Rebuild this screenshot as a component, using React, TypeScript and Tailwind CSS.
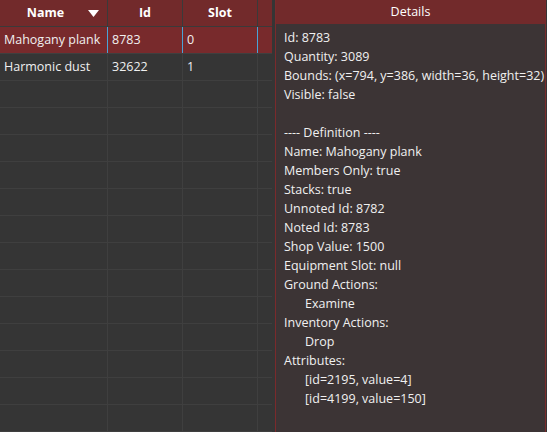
const ROWS = [
  { name: 'Mahogany plank', id: '8783', slot: '0' },
  { name: 'Harmonic dust', id: '32622', slot: '1' },
]

const DETAILS: { text: string; indent?: boolean }[] = [
  { text: 'Id: 8783' },
  { text: 'Quantity: 3089' },
  { text: 'Bounds: (x=794, y=386, width=36, height=32)' },
  { text: 'Visible: false' },
  { text: '' },
  { text: '---- Definition ----' },
  { text: 'Name: Mahogany plank' },
  { text: 'Members Only: true' },
  { text: 'Stacks: true' },
  { text: 'Unnoted Id: 8782' },
  { text: 'Noted Id: 8783' },
  { text: 'Shop Value: 1500' },
  { text: 'Equipment Slot: null' },
  { text: 'Ground Actions:' },
  { text: 'Examine', indent: true },
  { text: 'Inventory Actions:' },
  { text: 'Drop', indent: true },
  { text: 'Attributes:' },
  { text: '[id=2195, value=4]', indent: true },
  { text: '[id=4199, value=150]', indent: true },
]

const font = { fontFamily: '"Open Sans", "Noto Sans", sans-serif' }

export default function App() {
  const filler = Array.from({ length: 16 - ROWS.length })

  return (
    <div className="w-[547px] h-[432px] overflow-hidden bg-[#353535] flex text-[12.5px] text-[#f0f0f0]" style={font}>
      {/* Item table */}
      <div className="w-[272px] shrink-0 flex flex-col">
        <div className="h-[27px] shrink-0 flex bg-[#722a2b] border-b border-[#3a3a3a] font-bold text-white">
          <div className="w-[108px] border-r border-[#3a3a3a] flex items-center justify-center relative">
            <span className="-ml-4">Name</span>
            <svg className="absolute left-[88px] top-[10px]" width="11" height="7" viewBox="0 0 11 7">
              <path d="M0 0H11L5.5 7Z" fill="#fff" />
            </svg>
          </div>
          <div className="w-[75px] border-r border-[#3a3a3a] flex items-center justify-center">Id</div>
          <div className="w-[75px] border-r border-[#3a3a3a] flex items-center justify-center">Slot</div>
          <div className="flex-1" />
        </div>
        {ROWS.map((r, i) => (
          <div
            key={r.id}
            className={`h-[27px] shrink-0 flex border-b border-[#3f3f3f] ${i === 0 ? 'bg-[#782a2c]' : ''}`}
          >
            <div className={`w-[108px] border-r pl-[4px] flex items-center ${i === 0 ? 'border-[#4aa3d6]' : 'border-[#3f3f3f]'}`}>{r.name}</div>
            <div className={`w-[75px] border-r pl-[4px] flex items-center ${i === 0 ? 'border-[#4aa3d6]' : 'border-[#3f3f3f]'}`}>{r.id}</div>
            <div className={`w-[75px] border-r pl-[4px] flex items-center ${i === 0 ? 'border-[#4aa3d6]' : 'border-[#3f3f3f]'}`}>{r.slot}</div>
            <div className="flex-1" />
          </div>
        ))}
        {filler.map((_, i) => (
          <div key={i} className="h-[27px] shrink-0 flex border-b border-[#3f3f3f]">
            <div className="w-[108px] border-r border-[#3f3f3f]" />
            <div className="w-[75px] border-r border-[#3f3f3f]" />
            <div className="w-[75px] border-r border-[#3f3f3f]" />
            <div className="flex-1" />
          </div>
        ))}
      </div>

      {/* Details panel */}
      <div className="ml-[3px] w-[271px] mr-[1px] flex flex-col border-x border-[#7a2a2c] bg-[#3c3435]">
        <div className="h-[24px] shrink-0 bg-[#722a2b] flex items-center justify-center text-white">Details</div>
        <div className="pt-[4px] pl-[8px] whitespace-nowrap overflow-hidden">
          {DETAILS.map((d, i) => (
            <div key={i} className={`h-[19px] leading-[19px] ${d.indent ? 'pl-[21px]' : ''}`}>
              {d.text}
            </div>
          ))}
        </div>
      </div>
    </div>
  )
}
